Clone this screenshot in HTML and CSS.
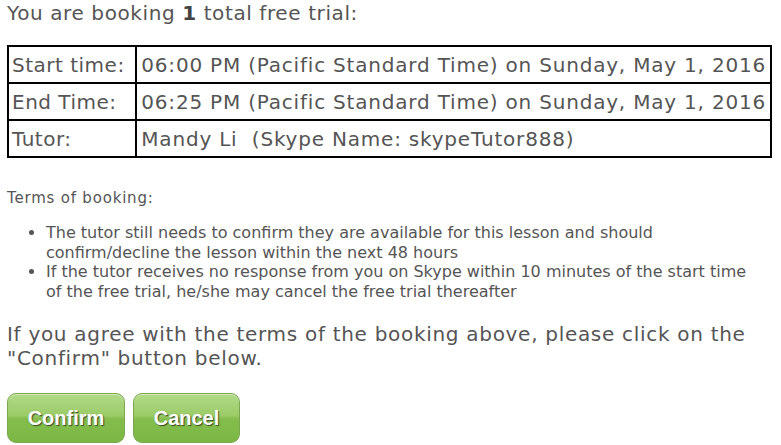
FILE: index.html
```html
<!DOCTYPE html>
<html lang="en">
<head>
    <meta charset="UTF-8">
    <title>Booking</title>
    <link rel="stylesheet" href="styles.css">
</head>
<body>
    <div id="booking_div">
        <p class="bookingTitle">You are booking <b>1</b> total free trial:</p>
        <table class="bookingTable">
            <tr>
                <td class="labelCell">Start time:</td>
                <td>06:00 PM (Pacific Standard Time) on Sunday, May 1, 2016</td>
            </tr>
            <tr>
                <td class="labelCell">End Time:</td>
                <td>06:25 PM (Pacific Standard Time) on Sunday, May 1, 2016</td>
            </tr>
            <tr>
                <td class="labelCell">Tutor:</td>
                <td>Mandy Li&nbsp; (Skype Name: skypeTutor888)</td>
            </tr>
        </table>
        <p class="termsTitle">Terms of booking:</p>
        <ul class="termsList">
            <li>The tutor still needs to confirm they are available for this lesson and should confirm/decline the lesson within the next 48 hours</li>
            <li>If the tutor receives no response from you on Skype within 10 minutes of the start time of the free trial, he/she may cancel the free trial thereafter</li>
        </ul>
        <p class="agreeText">If you agree with the terms of the booking above, please click on the "Confirm" button below.</p>
        <div class="buttonRow">
            <button class="greenButton confirmButton">Confirm</button>
            <button class="greenButton cancelButton">Cancel</button>
        </div>
    </div>
</body>
</html>
```
FILE: styles.css
```css
body {
    margin: 0;
    padding: 0 7px;

    font-family: "DejaVu Sans", Verdana, sans-serif;
    color: #555;
}
.bookingTitle {
    margin: 0;
    padding-top: 1px;

    font-size: 20px;
    letter-spacing: 0.6px;
    line-height: 24px;
}
.bookingTitle b {
    color: #444;
}
.bookingTable {
    margin-top: 20px;

    width: 765px;

    border-collapse: collapse;
    border: 2px solid #000;

    font-size: 20px;
    letter-spacing: 0.8px;
}
.bookingTable td {
    border: 2px solid #000;

    padding: 0 4px;

    height: 35px;

    white-space: nowrap;
}
.bookingTable .labelCell {
    width: 120px;
    padding-left: 3px;
    letter-spacing: 0.5px;
}
.termsTitle {
    margin: 31px 0 0;

    font-size: 15px;
    letter-spacing: 0.8px;
    line-height: 18px;
}
.termsList {
    margin: 16px 0 0;
    padding-left: 39px;
    padding-right: 12px;

    font-size: 16px;
    letter-spacing: 0;
    line-height: 19.5px;
}
.agreeText {
    margin: 21px 0 0;

    font-size: 20px;
    letter-spacing: 0.7px;
    line-height: 24px;
}
.buttonRow {
    display: flex;
    gap: 8px;

    margin-top: 23px;
}
.greenButton {
    height: 50px;

    border: 1px solid #7aa84f;
    border-radius: 9px;

    background: linear-gradient(#b2da89 0%, #9bcb67 45%, #84bd4c 52%, #7cb745 100%);
    box-shadow: inset 0 1px 0 rgba(255, 255, 255, 0.45);

    font-family: "Liberation Sans", Arial, sans-serif;
    font-weight: bold;
    font-size: 20px;
    color: #fff;
    text-shadow: 1px 1px 1px #3a4a2a;
}
.confirmButton {
    width: 118px;
}
.cancelButton {
    width: 107px;
}
```
